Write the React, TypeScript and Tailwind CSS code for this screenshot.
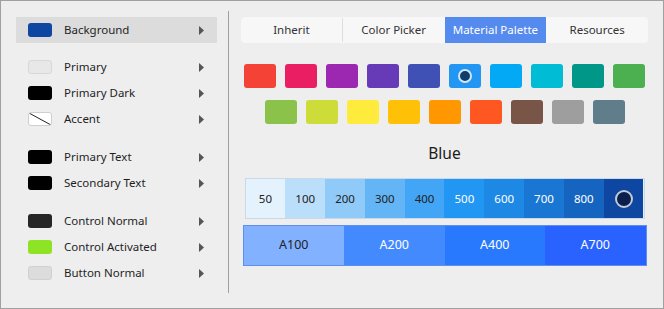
import React from "react";

type Item = { label: string; swatch: React.ReactNode; active?: boolean };

const Sw = ({ cls }: { cls: string }) => <div className={`w-[24px] h-[14px] rounded-[3px] ${cls}`} />;

const AccentSw = () => (
  <div className="w-[24px] h-[14px] rounded-[3px] bg-white border border-[#cfcfcf] overflow-hidden">
    <svg width="22" height="12" viewBox="0 0 22 12">
      <line x1="0" y1="0" x2="22" y2="12" stroke="#222" strokeWidth="1" />
    </svg>
  </div>
);

const Arrow = () => (
  <svg width="5" height="9" viewBox="0 0 5 9">
    <path d="M0 0 L5 4.5 L0 9 Z" fill="#555" />
  </svg>
);

const groups: Item[][] = [
  [{ label: "Background", swatch: <Sw cls="bg-[#0d47a1]" />, active: true }],
  [
    { label: "Primary", swatch: <Sw cls="bg-[#e8e8e8] border border-[#d8d8d8]" /> },
    { label: "Primary Dark", swatch: <Sw cls="bg-black" /> },
    { label: "Accent", swatch: <AccentSw /> },
  ],
  [
    { label: "Primary Text", swatch: <Sw cls="bg-black" /> },
    { label: "Secondary Text", swatch: <Sw cls="bg-black" /> },
  ],
  [
    { label: "Control Normal", swatch: <Sw cls="bg-[#262626]" /> },
    { label: "Control Activated", swatch: <Sw cls="bg-[#8fe325]" /> },
    { label: "Button Normal", swatch: <Sw cls="bg-[#dcdcdc] border border-[#d0d0d0]" /> },
  ],
];

const row1 = ["#f44336", "#e91e63", "#9c27b0", "#673ab7", "#3f51b5", "#2196f3", "#03a9f4", "#00bcd4", "#009688", "#4caf50"];
const row2 = ["#8bc34a", "#cddc39", "#ffeb3b", "#ffc107", "#ff9800", "#ff5722", "#795548", "#9e9e9e", "#607d8b"];

const shades = [
  { n: "50", c: "#e3f2fd", dark: true },
  { n: "100", c: "#bbdefb", dark: true },
  { n: "200", c: "#90caf9", dark: true },
  { n: "300", c: "#64b5f6", dark: true },
  { n: "400", c: "#42a5f5", dark: true },
  { n: "500", c: "#2196f3", dark: false },
  { n: "600", c: "#1e88e5", dark: false },
  { n: "700", c: "#1976d2", dark: false },
  { n: "800", c: "#1565c0", dark: false },
  { n: "", c: "#0d47a1", dark: false },
];

const accents = [
  { n: "A100", c: "#82b1ff", dark: true },
  { n: "A200", c: "#448aff", dark: false },
  { n: "A400", c: "#2979ff", dark: false },
  { n: "A700", c: "#2962ff", dark: false },
];

export default function App() {
  return (
    <div
      className="w-[664px] h-[309px] border border-[#a0a0a0] bg-[#eeeeee] flex text-[11.5px] text-[#1f1f1f]"
      style={{ fontFamily: '"Noto Sans", "Open Sans", sans-serif' }}
    >
      <div className="w-[227px] pl-[15px] pt-[16px] flex flex-col">
        {groups.map((g, gi) => (
          <div key={gi} className={gi === 0 ? "" : gi === 1 ? "mt-[11px]" : "mt-[12px]"}>
            {g.map((it) => (
              <div
                key={it.label}
                className={`w-[201px] h-[26px] flex items-center pl-[12px] pr-[13px] ${it.active ? "bg-[#dcdcdc]" : ""}`}
              >
                {it.swatch}
                <span className="ml-[12px] flex-1 leading-none">{it.label}</span>
                <Arrow />
              </div>
            ))}
          </div>
        ))}
      </div>
      <div className="w-px bg-[#a0a0a0] mt-[10px] mb-[15px]" />
      <div className="flex-1 pl-[12px] pr-[15px] pt-[16px] flex flex-col items-center">
        <div className="w-[407px] h-[26px] bg-[#f7f7f7] rounded-[4px] grid grid-cols-4 text-[#333]">
          <div className="flex items-center justify-center border-r border-[#dedede] my-[1px]">Inherit</div>
          <div className="flex items-center justify-center">Color Picker</div>
          <div className="flex items-center justify-center bg-[#558aee] text-white">Material Palette</div>
          <div className="flex items-center justify-center">Resources</div>
        </div>
        <div className="flex gap-[9px] mt-[21px]">
          {row1.map((c, i) => (
            <div key={c} className="w-[32px] h-[24px] rounded-[3px] flex items-center justify-center" style={{ backgroundColor: c }}>
              {i === 5 && <div className="w-[14px] h-[14px] rounded-full bg-[#0e3d6c] border-2 border-[#d2e6f8]" />}
            </div>
          ))}
        </div>
        <div className="flex gap-[9px] mt-[12px]">
          {row2.map((c) => (
            <div key={c} className="w-[32px] h-[24px] rounded-[3px]" style={{ backgroundColor: c }} />
          ))}
        </div>
        <div className="mt-[18px] h-[22px] leading-[22px] text-[15.5px] text-[#1a1a1a]">Blue</div>
        <div className="mt-[14px] flex w-[400px] h-[41px] border border-[#c9d9e9]">
          {shades.map((s) => (
            <div
              key={s.c}
              className={`flex-1 flex items-center justify-center ${s.dark ? "text-[#222]" : "text-white"}`}
              style={{ backgroundColor: s.c }}
            >
              {s.n ? s.n : <div className="w-[18px] h-[18px] rounded-full bg-[#0b1f4b] border-2 border-[#c3cbd8]" />}
            </div>
          ))}
        </div>
        <div className="mt-[6px] flex w-[404px] h-[41px] border border-[#5d8ff0]">
          {accents.map((s) => (
            <div
              key={s.c}
              className={`flex-1 flex items-center justify-center text-[12.5px] ${s.dark ? "text-[#222]" : "text-white"}`}
              style={{ backgroundColor: s.c }}
            >
              {s.n}
            </div>
          ))}
        </div>
      </div>
    </div>
  );
}
